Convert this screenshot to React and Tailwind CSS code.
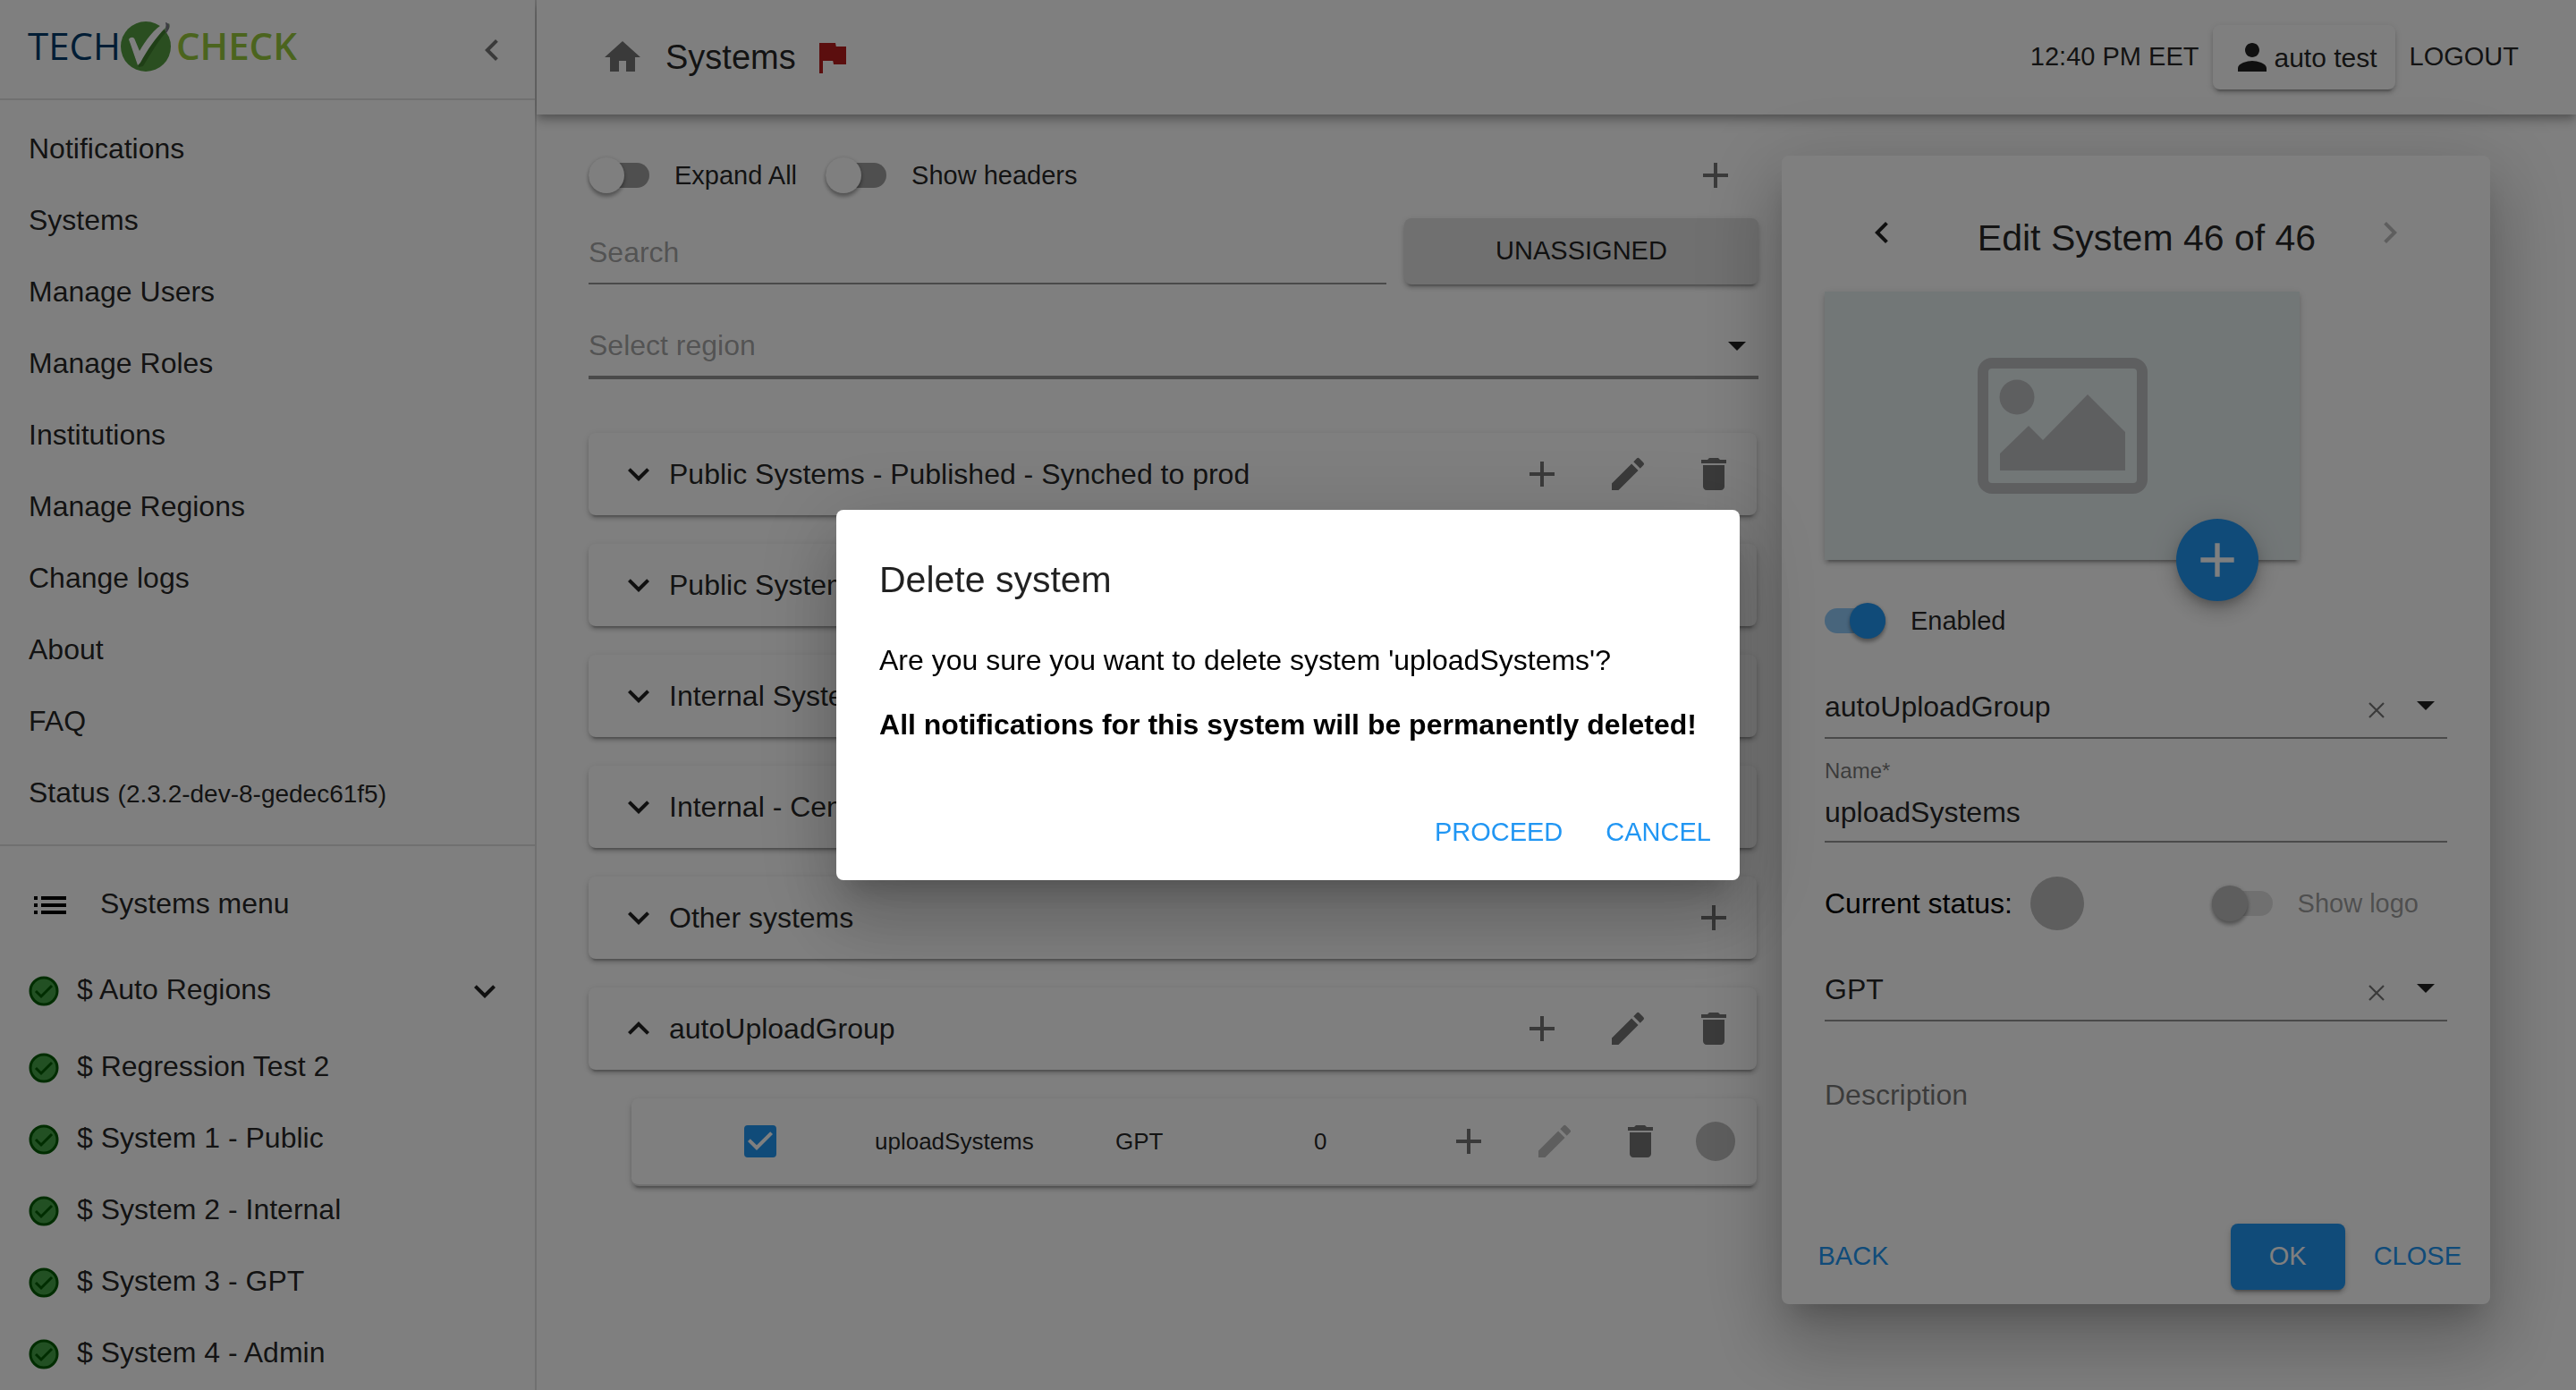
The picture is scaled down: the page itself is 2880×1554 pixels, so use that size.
import React from "react";
import {
  MdAdd,
  MdArrowDropDown,
  MdCheckBox,
  MdChevronLeft,
  MdChevronRight,
  MdCreate,
  MdDelete,
  MdExpandLess,
  MdExpandMore,
  MdFlag,
  MdHome,
  MdList,
  MdPerson,
} from "react-icons/md";

const elevation2 =
  "shadow-[0_6px_2px_-4px_rgba(0,0,0,0.2),0_4px_4px_0_rgba(0,0,0,0.14),0_2px_10px_0_rgba(0,0,0,0.12)]";
const elevation24 =
  "shadow-[0_22px_30px_-14px_rgba(0,0,0,0.2),0_48px_76px_6px_rgba(0,0,0,0.14),0_18px_92px_16px_rgba(0,0,0,0.12)]";

const pages = [
  "Notifications",
  "Systems",
  "Manage Users",
  "Manage Roles",
  "Institutions",
  "Manage Regions",
  "Change logs",
  "About",
  "FAQ",
];

const monitored = [
  "$ Regression Test 2",
  "$ System 1 - Public",
  "$ System 2 - Internal",
  "$ System 3 - GPT",
  "$ System 4 - Admin",
];

const groups = [
  { name: "Public Systems - Published - Synched to prod" },
  { name: "Public Systems" },
  { name: "Internal Systems" },
  { name: "Internal - Central" },
  { name: "Other systems", addOnly: true },
  { name: "autoUploadGroup", open: true },
];

function Logo() {
  return (
    <a
      href="#home"
      className="flex h-[58px] items-center gap-1 font-['Open_Sans',sans-serif] text-[42px] leading-[58px]"
    >
      <span className="w-[98px] text-[#003a6b]">TECH</span>
      <svg className="h-[60px] w-[60px]" viewBox="0 0 60 60" aria-hidden="true">
        <circle cx="30" cy="31" r="28" fill="#559c41" />
        <path d="M12 27c3-3 6-1 7 2l5 11C32 28 43 14 56 5c1 2 1 4 0 6C44 24 35 40 27 53l-5 1z" fill="#2f6a20" opacity=".6" />
        <path d="M11 23c2-3 6-3 7 1l5 12C30 24 39 11 52 4c1 2 1 3 0 6C41 21 31 36 24 49l-3 3z" fill="#fff" />
        <path d="M52 4c5 1 6 7 0 13c1-4 1-9 0-13z" fill="#7a7a86" />
      </svg>
      <span className="font-semibold text-[#97c93d]">CHECK</span>
    </a>
  );
}

function StatusOk() {
  return (
    <svg className="size-[34px] shrink-0" viewBox="0 0 34 34" aria-hidden="true">
      <circle cx="17" cy="17" r="15" fill="#44a047" stroke="#005a00" strokeWidth="3" />
      <path d="M8 17l6 6L26 11" fill="none" stroke="#005a00" strokeWidth="3" />
    </svg>
  );
}

function Switch({ label, on = false, disabled = false }) {
  return (
    <label className={"flex items-center gap-7 text-[29px] leading-8 " + (disabled ? "text-black/40" : "text-black/87")}>
      <input
        type="checkbox"
        role="switch"
        defaultChecked={on}
        disabled={disabled}
        className="relative h-7 w-[68px] shrink-0 appearance-none rounded-full bg-black/38 before:absolute before:-top-1.5 before:left-0 before:size-10 before:rounded-full before:bg-white before:shadow-[0_4px_4px_rgba(0,0,0,0.3),0_0_4px_rgba(0,0,0,0.15)] checked:bg-[#2196f3]/50 checked:before:left-7 checked:before:bg-[#2196f3] disabled:bg-black/12 disabled:before:bg-[#bdbdbd]"
      />
      {label}
    </label>
  );
}

function IconButton({ label, icon: Icon, disabled = false, tone = "text-black/54" }) {
  return (
    <button
      type="button"
      aria-label={label}
      disabled={disabled}
      className={"flex h-12 w-24 shrink-0 items-center justify-center disabled:text-black/26 " + tone}
    >
      <Icon className="size-12" />
    </button>
  );
}

function GroupCard({ name, open, addOnly }) {
  return (
    <div className={"flex h-[92px] items-center rounded-lg bg-white pl-8 " + elevation2}>
      <button type="button" aria-expanded={!!open} className="flex flex-1 items-center gap-2.5 text-left text-[32px] leading-10 whitespace-nowrap text-black/87">
        {open ? <MdExpandLess className="size-12" /> : <MdExpandMore className="size-12" />}
        {name}
      </button>
      <IconButton label="Add" icon={MdAdd} />
      {!addOnly && <IconButton label="Edit" icon={MdCreate} />}
      {!addOnly && <IconButton label="Delete" icon={MdDelete} />}
    </div>
  );
}

function ClearableSelect({ label, value }) {
  return (
    <div className="relative">
      <select
        aria-label={label}
        defaultValue={value}
        className="block h-[70px] w-full appearance-none border-b-2 border-black/42 bg-transparent text-[32px] text-black/87"
      >
        <option>{value}</option>
      </select>
      <button type="button" aria-label={"Clear " + label} className="absolute top-[29px] right-[70px] size-[18px] text-black/54">
        <svg viewBox="0 0 18 18" className="size-[18px]" fill="none" stroke="currentColor" strokeWidth="2.2">
          <path d="M1 1l16 16M17 1L1 17" />
        </svg>
      </button>
      <MdArrowDropDown className="pointer-events-none absolute top-2 right-0 size-12 text-black/87" />
    </div>
  );
}

function Sidebar() {
  return (
    <aside className="relative z-10 w-[600px] shrink-0 overflow-hidden border-r-2 border-black/12 bg-white bg-clip-padding">
      <div className="flex h-28 items-center justify-between border-b-2 border-black/12 pr-6 pb-2 pl-[31px]">
        <Logo />
        <button type="button" aria-label="Collapse menu" className="mt-2.5 text-black/54">
          <MdChevronLeft className="size-12" />
        </button>
      </div>
      <nav className="border-b-2 border-black/12 py-4 text-[32px] text-black/87">
        {pages.map((page) => (
          <a key={page} href="#page" className="flex h-20 items-center px-8 pb-1">
            {page}
          </a>
        ))}
        <a href="#status" className="flex h-20 items-center px-8 pb-1">
          <span>
            Status <span className="text-[28px]">(2.3.2-dev-8-gedec61f5)</span>
          </span>
        </a>
      </nav>
      <nav className="pt-4 text-[32px] text-black/87">
        <h2 className="flex h-[100px] items-center gap-8 px-8">
          <MdList className="size-12 text-black" />
          <span className="pb-1">Systems menu</span>
        </h2>
        <a href="#system" className="flex h-[92px] items-center gap-5 px-8">
          <StatusOk />
          <span className="flex-1 pb-1">$ Auto Regions</span>
          <MdExpandMore className="size-12" />
        </a>
        {monitored.map((name) => (
          <a key={name} href="#system" className="flex h-20 items-center gap-5 px-8">
            <StatusOk />
            <span className="pb-1">{name}</span>
          </a>
        ))}
      </nav>
    </aside>
  );
}

function TopBar() {
  return (
    <header className="relative flex h-32 items-center bg-white pr-16 pl-[72px] shadow-[0_4px_8px_-2px_rgba(0,0,0,0.2),0_8px_10px_rgba(0,0,0,0.14),0_2px_20px_rgba(0,0,0,0.12)]">
      <MdHome className="size-12 text-black/54" />
      <h1 className="ml-6 text-[38px] text-black/87">Systems</h1>
      <MdFlag className="ml-4 size-12 text-[#b71c1c]" />
      <div className="ml-auto flex items-center gap-4 text-[29px] text-black/87">
        <span>12:40 PM EET</span>
        <button type="button" className={"flex h-[72px] items-center rounded-lg bg-white px-5 text-[30px] " + elevation2}>
          <MdPerson className="size-12" />
          auto test
        </button>
        <button type="button">LOGOUT</button>
      </div>
    </header>
  );
}

function SystemsList() {
  return (
    <section className="min-w-0 flex-1 pt-11">
      <div className="flex h-12 items-center gap-8">
        <Switch label="Expand All" />
        <Switch label="Show headers" />
        <div className="ml-auto">
          <IconButton label="Add group" icon={MdAdd} />
        </div>
      </div>
      <div className="mt-6 flex gap-5">
        <input
          type="text"
          aria-label="Search"
          placeholder="Search"
          className="h-[74px] min-w-0 flex-1 border-b-2 border-black/42 bg-transparent pt-1 text-[32px] placeholder:text-black/37"
        />
        <button type="button" className={"h-[74px] w-[396px] rounded-lg bg-[#e0e0e0] text-[29px] text-black/87 " + elevation2}>
          UNASSIGNED
        </button>
      </div>
      <div className="relative mt-8">
        <select
          aria-label="Select region"
          className="block h-[74px] w-full appearance-none border-b-4 border-black/42 bg-transparent pt-0.5 text-[32px] text-black/37"
        >
          <option>Select region</option>
        </select>
        <MdArrowDropDown className="pointer-events-none absolute top-3 right-0 size-12 text-black/87" />
      </div>
      <div className="mt-[60px] mr-0.5 flex flex-col gap-8">
        {groups.map((group) => (
          <GroupCard key={group.name} {...group} />
        ))}
        <div className={"ml-12 rounded-lg border-b-2 border-[#e0e0e0] bg-white " + elevation2}>
          <table className="w-full text-[26px] text-black/87">
            <tbody>
              <tr className="h-24">
                <td className="w-[272px] pl-[120px]">
                  <label className="block size-12">
                    <input type="checkbox" aria-label="uploadSystems" defaultChecked className="absolute size-12 appearance-none" />
                    <MdCheckBox className="size-12 text-[#2196f3]" />
                  </label>
                </td>
                <td className="w-[269px]">uploadSystems</td>
                <td className="w-[222px]">GPT</td>
                <td>0</td>
                <td className="w-[370px]">
                  <div className="flex items-center">
                    <IconButton label="Add" icon={MdAdd} />
                    <IconButton label="Edit" icon={MdCreate} disabled />
                    <IconButton label="Delete" icon={MdDelete} />
                    <span className="ml-3.5 size-11 rounded-full bg-[#bdbdbd]" />
                  </div>
                </td>
              </tr>
            </tbody>
          </table>
        </div>
      </div>
    </section>
  );
}

function EditPanel() {
  return (
    <section className={"relative mt-[46px] w-[792px] shrink-0 self-start rounded-lg bg-white " + elevation24}>
      <div className="px-12 pt-[62px]">
        <div className="flex h-[60px] justify-between px-4">
          <IconButton label="Previous system" icon={MdChevronLeft} tone="text-black/87" />
          <h2 className="pl-6 text-[41px] leading-[60px] text-black/87">Edit System 46 of 46</h2>
          <IconButton label="Next system" icon={MdChevronRight} disabled />
        </div>
        <div className={"relative mt-[30px] flex h-[300px] w-[531px] items-center justify-center bg-[#e5eeef] " + elevation2}>
          <svg className="h-[152px] w-[190px]" viewBox="0 0 190 152" aria-hidden="true">
            <rect x="6" y="6" width="178" height="140" rx="10" fill="none" stroke="#bdbfc1" strokeWidth="12" />
            <circle cx="44" cy="44" r="19.5" fill="#bdbfc1" />
            <path d="M25 126V107L57 76l16 16 50-51 42 42v43z" fill="#bdbfc1" />
          </svg>
          <button
            type="button"
            aria-label="Upload image"
            className="absolute right-[46px] -bottom-[46px] flex size-[92px] items-center justify-center rounded-full bg-[#2196f3] text-white shadow-[0_6px_10px_-2px_rgba(0,0,0,0.2),0_12px_20px_rgba(0,0,0,0.14),0_2px_36px_rgba(0,0,0,0.12)]"
          >
            <MdAdd className="size-16" />
          </button>
        </div>
        <div className="mt-12 flex h-10 items-center">
          <Switch label="Enabled" on />
        </div>
        <div className="mt-[42px]">
          <ClearableSelect label="Group" value="autoUploadGroup" />
        </div>
        <div className="mt-5 flex flex-col">
          <label htmlFor="system-name" className="text-2xl leading-8 text-black/54">
            Name*
          </label>
          <input
            id="system-name"
            type="text"
            defaultValue="uploadSystems"
            className="h-16 w-full border-b-2 border-black/42 bg-transparent pb-0.5 text-[32px] text-black/87"
          />
        </div>
        <div className="mt-[38px] flex h-[60px] items-center">
          <span className="text-[32px] leading-[60px] text-black">Current status:</span>
          <span className="ml-5 size-[60px] rounded-full bg-[#bdbdbd]" />
          <span className="mr-8 ml-auto">
            <Switch label="Show logo" disabled />
          </span>
        </div>
        <div className="mt-8">
          <ClearableSelect label="Type" value="GPT" />
        </div>
        <textarea
          aria-label="Description"
          placeholder="Description"
          rows={1}
          className="mt-[62px] block h-[148px] w-full resize-none bg-transparent text-[32px] leading-10 placeholder:text-black/54"
        />
      </div>
      <div className="flex gap-4 p-4 text-[29px] text-[#2196f3]">
        <button type="button" className="mr-auto h-[74px] w-32">BACK</button>
        <button type="button" className={"h-[74px] w-32 rounded-lg bg-[#2196f3] text-white " + elevation2}>OK</button>
        <button type="button" className="h-[74px] px-4">CLOSE</button>
      </div>
    </section>
  );
}

function DeleteDialog() {
  return (
    <div className="fixed inset-0 z-20 flex items-center justify-center bg-black/50">
      <div role="dialog" aria-modal="true" aria-labelledby="dialog-title" className={"rounded-lg bg-white " + elevation24}>
        <div className="px-12 pt-12 text-[32px] leading-10 whitespace-nowrap text-black">
          <h2 id="dialog-title" className="text-[41px] leading-[60px] text-black/87">
            Delete system
          </h2>
          <p className="mt-10">Are you sure you want to delete system 'uploadSystems'?</p>
          <p className="mt-8 font-bold">All notifications for this system will be permanently deleted!</p>
        </div>
        <div className="mt-16 flex justify-end gap-4 px-4 pb-4 text-[29px] text-[#2196f3]">
          <button type="button" className="h-[74px] px-4">PROCEED</button>
          <button type="button" className="h-[74px] px-4">CANCEL</button>
        </div>
      </div>
    </div>
  );
}

export default function App() {
  return (
    <div className="flex min-h-screen bg-white font-['Liberation_Sans',Arial,sans-serif]">
      <Sidebar />
      <div className="flex min-w-0 flex-1 flex-col">
        <TopBar />
        <main className="flex gap-[26px] pr-24 pl-[58px]">
          <SystemsList />
          <EditPanel />
        </main>
      </div>
      <DeleteDialog />
    </div>
  );
}
